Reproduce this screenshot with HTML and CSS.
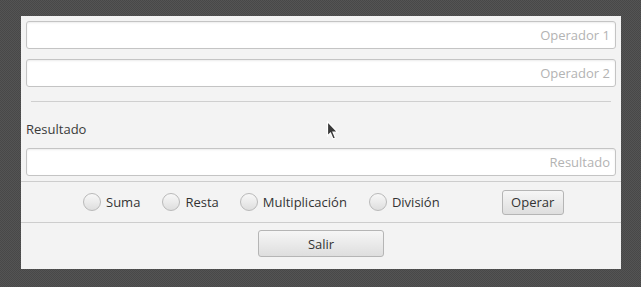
FILE: index.html
```html
<!DOCTYPE html>
<html lang="es">
<head>
<meta charset="utf-8">
<title>Calculadora</title>
<link rel="stylesheet" href="styles.css">
</head>
<body>
<div class="window">
  <div class="top">
    <div class="field"><span class="ph">Operador 1</span></div>
    <div class="field"><span class="ph">Operador 2</span></div>
    <div class="sep"></div>
    <div class="label">Resultado</div>
    <div class="field"><span class="ph">Resultado</span></div>
  </div>
  <div class="ops">
    <label class="radio r-suma"><span class="dot"></span>Suma</label>
    <label class="radio r-resta"><span class="dot"></span>Resta</label>
    <label class="radio r-mult"><span class="dot"></span>Multiplicación</label>
    <label class="radio r-div"><span class="dot"></span>División</label>
    <button class="btn btn-operar">Operar</button>
  </div>
  <div class="bottom">
    <button class="btn btn-salir">Salir</button>
  </div>
  <svg class="cursor" width="14" height="22" viewBox="0 0 14 22">
    <path d="M1.5 1.5 L1.5 16 L4.5 13 L7 19 L9.5 18 L7 12 L11.5 12 Z" fill="#3a3a3a" stroke="#ffffff" stroke-width="1.2" stroke-linejoin="miter"/>
  </svg>
</div>
</body>
</html>
```
FILE: styles.css
```css
html, body {
  margin: 0;
  padding: 0;
}
body {
  width: 641px;
  height: 287px;
  overflow: hidden;
  background-color: #4c4c4c;
  background-image: conic-gradient(#545454 25%, #484848 0 50%, #545454 0 75%, #484848 0);
  background-size: 2px 2px;
  font-family: "Open Sans", "Noto Sans", sans-serif;
  font-size: 13px;
  color: #333;
  padding: 16px 0 0 21px;
  box-sizing: border-box;
}
.window {
  position: relative;
  width: 600px;
  height: 253px;
  background: #f3f3f3;
  display: flex;
  flex-direction: column;
}
.top {
  padding: 5px 5px 5px 5px;
  display: flex;
  flex-direction: column;
  border-bottom: 1px solid #cdcdcd;
}
.field {
  height: 28px;
  box-sizing: border-box;
  border: 1px solid #c4c4c4;
  border-radius: 3px;
  background: #fff;
  box-shadow: inset 0 1px 2px rgba(0,0,0,0.08);
  display: flex;
  align-items: center;
  justify-content: flex-end;
  padding: 0 5px 0 7px;
}
.field + .field {
  margin-top: 10px;
}
.ph {
  color: #b3b3b3;
  line-height: 1;
}
.sep {
  height: 1px;
  background: #cfcfcf;
  margin: 14px 5px 0 5px;
}
.label {
  margin-top: 18px;
  height: 18px;
  line-height: 18px;
  margin-bottom: 10px;
  color: #3a3a3a;
}
.ops {
  height: 40px;
  display: flex;
  align-items: center;
  padding-left: 62px;
  border-bottom: 1px solid #cdcdcd;
}
.radio {
  display: flex;
  align-items: center;
  color: #333;
}
.dot {
  width: 18px;
  height: 18px;
  box-sizing: border-box;
  border-radius: 50%;
  border: 1px solid #b9b9b9;
  background: linear-gradient(#f8f8f8, #dedede);
  margin-right: 5px;
}
.r-resta { margin-left: 22px; }
.r-mult { margin-left: 21px; }
.r-div { margin-left: 22px; }
.btn {
  font-family: "Open Sans", "Noto Sans", sans-serif;
  font-size: 13px;
  color: #333;
  border: 1px solid #b5b5b5;
  border-radius: 3px;
  background: linear-gradient(#f6f6f6, #dedede);
  padding: 0;
}
.btn-operar {
  margin-left: 62px;
  width: 62px;
  height: 25px;
}
.bottom {
  flex: 1;
  display: flex;
  justify-content: center;
  padding-top: 7px;
}
.btn-salir {
  width: 126px;
  height: 27px;
}
.cursor {
  position: absolute;
  left: 305px;
  top: 104px;
}
```
